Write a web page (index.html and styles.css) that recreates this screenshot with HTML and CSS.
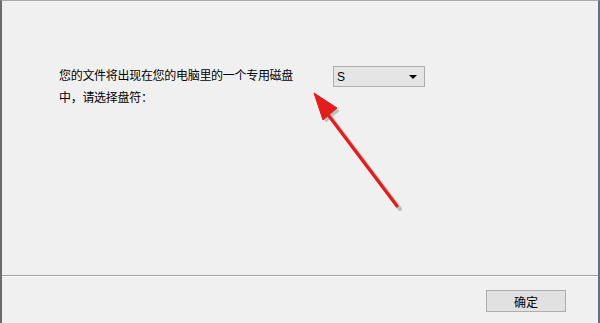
FILE: index.html
```html
<!DOCTYPE html>
<html lang="zh-CN">
<head>
  <meta charset="UTF-8">
  <title>选择盘符</title>
  <link rel="stylesheet" href="styles.css">
</head>
<body>
  <div class="window">
    <div class="content">
      <div class="row">
        <p class="label">您的文件将出现在您的电脑里的一个专用磁盘中，请选择盘符：</p>
        <div class="combo">
          <span class="combo-value">S</span>
          <span class="combo-arrow"></span>
        </div>
      </div>
      <svg class="pointer" width="600" height="275" viewBox="0 0 600 275">
        <g transform="translate(3,3)" fill="#7a7a7a" stroke="#7a7a7a" opacity="0.4">
          <line x1="326" y1="112" x2="397" y2="206" stroke-width="4" stroke-linecap="round"/>
          <polygon points="314,93 336,108 323,119" stroke-width="1"/>
        </g>
        <line x1="326" y1="112" x2="397" y2="206" stroke="#e41c1c" stroke-width="3.2" stroke-linecap="round"/>
        <polygon points="314,93 337,108 323,120" fill="#e41c1c" stroke="#e41c1c" stroke-width="1" stroke-linejoin="round"/>
      </svg>
    </div>
    <div class="footer">
      <button class="btn-ok">确定</button>
    </div>
  </div>
</body>
</html>
```

FILE: styles.css
```css
html, body {
  margin: 0;
  padding: 0;
  background: #f0f0f0;
  font-family: "Noto Sans CJK SC", "Microsoft YaHei", sans-serif;
  font-size: 12px;
  color: #000;
}

.window {
  width: 600px;
  height: 323px;
  box-sizing: border-box;
  border-top: 1px solid #a9a9a9;
  border-left: 2px solid #6b6b6b;
  border-right: 2px solid #5f7378;
  background: #f0f0f0;
  overflow: hidden;
}

.content {
  position: relative;
  height: 274px;
  border-bottom: 1px solid #a0a0a0;
  box-shadow: 0 1px 0 #ffffff;
}

.row {
  display: flex;
  align-items: flex-start;
  padding: 63px 0 0 57px;
}

.label {
  width: 238px;
  margin: 0 36px 0 0;
  line-height: 22px;
  letter-spacing: -0.3px;
}

.combo {
  width: 90px;
  height: 19px;
  display: flex;
  align-items: center;
  justify-content: space-between;
  border: 1px solid #adadad;
  background: #e5e5e5;
  margin-top: 2px;
}

.combo-value {
  padding-left: 3px;
  font-family: "Liberation Sans", sans-serif;
  font-size: 12px;
}

.combo-arrow {
  width: 0;
  height: 0;
  margin-right: 7px;
  border-left: 4px solid transparent;
  border-right: 4px solid transparent;
  border-top: 4px solid #000;
}

.pointer {
  position: absolute;
  left: -2px;
  top: -1px;
}

.footer {
  display: flex;
  justify-content: flex-end;
  padding: 14px 32px 0 0;
}

.btn-ok {
  width: 80px;
  height: 22px;
  border: 1px solid #adadad;
  background: #e1e1e1;
  font-family: inherit;
  font-size: 12px;
  padding: 0;
  color: #000;
}
```
